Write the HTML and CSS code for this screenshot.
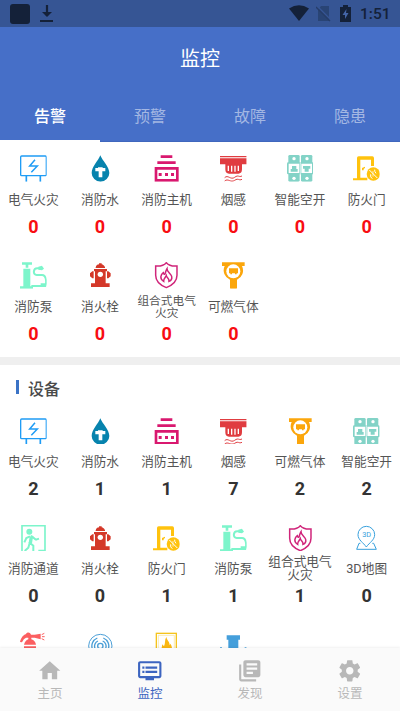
FILE: index.html
```html
<!DOCTYPE html>
<html lang="zh-CN">
<head>
<meta charset="utf-8">
<title>监控</title>
<link rel="stylesheet" href="styles.css">
</head>
<body>
<svg class="defs" width="0" height="0">
  <symbol id="elec" viewBox="0 0 80 80"><g fill="none" stroke="#1f9cf5" stroke-width="4"><rect x="2" y="3" width="77" height="59" rx="3"/><path d="M19 62V80M61 62V80" stroke-width="5"/><path d="M45 14L29 33H52L34 52" stroke-width="4.500"/></g></symbol>
  <symbol id="water" viewBox="0 0 80 80"><path fill="#0783ad" d="M40 1C34 17 14 36 14 54a26.500 26 0 0 0 53 0C67 36 46 17 40 1Z"/><path fill="#fff" d="M25 39H33V37H47V39H55V49H46V67H35V49H25Z"/></symbol>
  <symbol id="host" viewBox="0 0 80 80"><g fill="#d9186f"><path d="M23 1H58V9H23ZM13 19H68V27H13Z"/><path fill-rule="evenodd" d="M5 36H77V80H5ZM13 44V72H69V44Z"/><path d="M17 54H26V63H17ZM36 54H45V63H36ZM54 54H63V63H54Z"/></g></symbol>
  <symbol id="smoke" viewBox="0 0 80 80"><path fill="#e03c40" d="M0 3H80V7H0ZM0 10H80V28H66V43Q66 56 55 56H27Q16 56 16 43V28H0Z"/><path d="M25 32V48M35 32V50M45 32V50M55 32V48" stroke="#fff" stroke-width="4"/><path d="M14 68C24 58 32 76 44 67S56 68 66 63M14 78C24 69 32 84 44 76S56 78 66 73" fill="none" stroke="#e03c40" stroke-width="3"/></symbol>
  <symbol id="breaker" viewBox="0 0 80 80"><g fill="#83d3c7"><rect x="4" y="0" width="34" height="80" rx="4"/><rect x="42" y="0" width="34" height="80" rx="4"/><rect y="22" width="80" height="36" rx="4"/></g><path fill="#fff" d="M5 26H37V54H5ZM43 26H75V54H43Z"/><path d="M40 22V58" stroke="#fff" stroke-width="2"/><g fill="#83d3c7"><path d="M15 33H28V42H32V50H11V42H15ZM48 33H70V41H65V50H53V41H48Z"/></g><g fill="#fff"><circle cx="21" cy="11" r="5"/><circle cx="60" cy="11" r="5"/><circle cx="21" cy="70" r="5"/><circle cx="60" cy="70" r="5"/></g></symbol>
  <symbol id="door" viewBox="0 0 80 80"><g fill="#ffc20d"><path d="M12 9Q12 4 17 4H58Q63 4 63 9V33H54V14H22V68H43V76H0V70H12Z"/><path d="M27 39L36 35V39L32 42V46H27Z"/><circle cx="61" cy="57" r="20"/></g><path d="M49 45L73 69M53 58Q51 67 58 71M65 44Q64 49 69 55" fill="none" stroke="#fff" stroke-width="3"/><path d="M60 48V65" stroke="#fff" stroke-width="2"/></symbol>
  <symbol id="pump" viewBox="0 0 80 80"><g fill="#7df5cb"><path d="M6 1H36V8H25V17H17V8H6ZM10 20H31V73H39V80H0V73H10Z"/><path d="M55 14L66 11 72 20 66 25 55 23Z"/></g><path d="M64 19H52C39 19 38 39 50 39H66C80 39 80 63 76 72H34" fill="none" stroke="#7df5cb" stroke-width="6"/><path d="M62 64H77V75H62Z" fill="#7df5cb"/></symbol>
  <symbol id="hydrant" viewBox="0 0 80 80"><g fill="#d43829"><path d="M26 16C28 9 33 7 36 7V4H44V7C48 8 52 11 54 16V18H26ZM21 21H60V28H56V64H68V75H12V64H24V28H21Z"/><path d="M20 28V49H16L9 43V34L16 28ZM60 28V49H64L71 43V34L64 28Z"/></g><circle cx="40" cy="37" r="8" fill="#fff"/></symbol>
  <symbol id="shield" viewBox="0 0 80 80"><g fill="none" stroke="#d0257a" stroke-width="4.500"><path d="M40 2C34 9 20 13 8 12V40C8 57 22 70 40 77C58 70 72 57 72 40V12C60 13 46 9 40 2Z"/><path d="M32 58C18 50 24 37 31 32C32 37 34 37 36 36C38 31 38 26 42 20C42 30 54 35 56 43C58 51 53 56 48 58C49 49 42 49 40 41C37 48 31 50 32 58Z"/></g></symbol>
  <symbol id="gas" viewBox="0 0 80 80"><path fill="#fba60c" d="M6 1H74V12H66A30 30 0 0 1 51 53V78Q51 80 49 80H32Q30 80 30 78V53A30 30 0 0 1 14 12H6Z"/><circle cx="40" cy="28" r="21" fill="#fff"/><path fill="#fba60c" d="M27 19H54V34H50V37H45V34H36V37H31V34H27Z"/></symbol>
  <symbol id="exit" viewBox="0 0 80 80"><g fill="none" stroke="#7df5cb"><path stroke-width="5" d="M6 80V2H75V80M55 77H75"/><path d="M30 34L19 39 13 52M32 33C40 35 43 42 48 44L57 41M35 37L29 53 40 62V80M29 54L25 68 14 78" stroke-width="6"/><path d="M34 35L31 55" stroke-width="10"/></g><circle cx="28" cy="20" r="9" fill="#7df5cb"/></symbol>
  <symbol id="exting" viewBox="0 0 80 80"><g fill="#fb5f61"><path d="M0 30C3 17 11 8 17 7C21 0 30 0 33 8H44L62 5V22L44 17H34V22Q46 26 48 38H12Q15 26 25 22V17H18Q11 19 6 31ZM12 43H48V80H12Z"/><path d="M65 8L73 4M66 14H74M65 20L73 24" stroke="#fb5f61" stroke-width="3"/></g></symbol>
  <symbol id="alarm" viewBox="0 0 80 80"><g fill="none" stroke="#4b9fd7" stroke-width="3"><circle cx="40" cy="42" r="35"/><circle cx="40" cy="42" r="8" stroke-width="4"/><path d="M24 49A17 17 0 0 1 33 27M47 27A17 17 0 0 1 56 49M17 53A26 26 0 0 1 31 18M49 18A26 26 0 0 1 63 53" stroke-width="4"/></g></symbol>
  <symbol id="fire" viewBox="0 0 80 80"><rect x="10" y="4" width="60" height="74" fill="none" stroke="#f5c41d" stroke-width="4"/><path d="M16 10H64V72H16Z" fill="none" stroke="#f5d66a" stroke-width="1.500"/><path fill="#fbb812" d="M26 60C24 50 27 45 28 37L33 43C38 34 34 24 40 15C43 28 50 28 50 40L53 35C57 44 59 52 55 62Z"/></symbol>
  <symbol id="pipe" viewBox="0 0 80 80"><path fill="#459fdb" d="M20 10H60V23H55V80H25V23H20ZM0 46H6V80H0ZM74 46H80V80H74Z"/></symbol>
</svg>
<div class="screen">
  <div class="status">
    <span class="app"></span>
    <svg class="download" width="14" height="19" viewBox="0 0 14 19"><path d="M7 1V12M0 17H13" stroke="#142139" stroke-width="2.200"/><path d="M2 8H12L7 13Z" fill="#142139"/></svg>
    <svg class="wifi" width="20" height="16" viewBox="0 0 20 16"><path fill="#142139" d="M0 3.500Q10-3 20 3.500L10 16Z"/></svg>
    <svg class="sim" width="15" height="16" viewBox="0 0 15 16"><path fill="#294475" d="M5 0H13V15H2V4Z"/><path d="M1 0L15 14" stroke="#365594" stroke-width="1.500"/><path d="M0 1L14 15" stroke="#263d69" stroke-width="1.300"/></svg>
    <svg class="battery" width="11" height="17" viewBox="0 0 11 17"><path fill="#142139" d="M3 0H8V2H11V17H0V2H3Z"/><path fill="#4465a8" d="M6.500 4L2.500 10H5V14L8.500 8H6Z"/></svg>
    <span class="time">1:51</span>
  </div>
  <header class="header">
    <h1>监控</h1>
    <div class="tabs"><span class="tab on">告警</span><span class="tab">预警</span><span class="tab">故障</span><span class="tab">隐患</span></div>
  </header>
  <main class="content">
    <section class="grid alerts">
      <div class="cell"><svg><use href="#elec"/></svg><span class="label">电气火灾</span><b>0</b></div>
      <div class="cell"><svg><use href="#water"/></svg><span class="label">消防水</span><b>0</b></div>
      <div class="cell"><svg><use href="#host"/></svg><span class="label">消防主机</span><b>0</b></div>
      <div class="cell"><svg><use href="#smoke"/></svg><span class="label">烟感</span><b>0</b></div>
      <div class="cell"><svg><use href="#breaker"/></svg><span class="label">智能空开</span><b>0</b></div>
      <div class="cell"><svg><use href="#door"/></svg><span class="label">防火门</span><b>0</b></div>
      <div class="cell"><svg><use href="#pump"/></svg><span class="label">消防泵</span><b>0</b></div>
      <div class="cell"><svg><use href="#hydrant"/></svg><span class="label">消火栓</span><b>0</b></div>
      <div class="cell"><svg><use href="#shield"/></svg><span class="label long">组合式电气<br>火灾</span><b>0</b></div>
      <div class="cell"><svg><use href="#gas"/></svg><span class="label">可燃气体</span><b>0</b></div>
    </section>
    <h2 class="title">设备</h2>
    <section class="grid devices">
      <div class="cell"><svg><use href="#elec"/></svg><span class="label">电气火灾</span><b>2</b></div>
      <div class="cell"><svg><use href="#water"/></svg><span class="label">消防水</span><b>1</b></div>
      <div class="cell"><svg><use href="#host"/></svg><span class="label">消防主机</span><b>1</b></div>
      <div class="cell"><svg><use href="#smoke"/></svg><span class="label">烟感</span><b>7</b></div>
      <div class="cell"><svg><use href="#gas"/></svg><span class="label">可燃气体</span><b>2</b></div>
      <div class="cell"><svg><use href="#breaker"/></svg><span class="label">智能空开</span><b>2</b></div>
      <div class="cell"><svg><use href="#exit"/></svg><span class="label">消防通道</span><b>0</b></div>
      <div class="cell"><svg><use href="#hydrant"/></svg><span class="label">消火栓</span><b>0</b></div>
      <div class="cell"><svg><use href="#door"/></svg><span class="label">防火门</span><b>1</b></div>
      <div class="cell"><svg><use href="#pump"/></svg><span class="label">消防泵</span><b>1</b></div>
      <div class="cell"><svg><use href="#shield"/></svg><span class="label long">组合式电气<br>火灾</span><b>1</b></div>
      <div class="cell"><svg viewBox="0 0 80 80"><path fill="none" stroke="#36a0dc" stroke-width="3" d="M40 66C31 53 15 45 15 29a25 25 0 0 1 50 0C65 45 49 53 40 66ZM22 55H18L11 73H70L62 55H58"/><text x="41" y="35" text-anchor="middle" class="map-text">3D</text></svg><span class="label">3D地图</span><b>0</b></div>
      <div class="cell"><svg><use href="#exting"/></svg></div>
      <div class="cell"><svg><use href="#alarm"/></svg></div>
      <div class="cell"><svg><use href="#fire"/></svg></div>
      <div class="cell"><svg><use href="#pipe"/></svg></div>
    </section>
  </main>
  <nav class="nav">
    <div class="item"><svg viewBox="0 0 24 24"><path d="M10 20v-6h4v6h5v-8h3L12 3 2 12h3v8z"/></svg><span>主页</span></div>
    <div class="item on"><svg viewBox="0 0 24 24"><path d="M21 3H3c-1.100 0-2 .9-2 2v12c0 1.100.9 2 2 2h5v2h8v-2h5c1.100 0 1.990-.9 1.990-2L23 5c0-1.100-.9-2-2-2zm0 14H3V5h18v12zm-2-9H8v2h11V8zm0 4H8v2h11v-2zM7 8H5v2h2V8zm0 4H5v2h2v-2z"/></svg><span>监控</span></div>
    <div class="item"><svg viewBox="0 0 24 24"><path d="M4 6H2v14c0 1.100.9 2 2 2h14v-2H4V6zm16-4H8c-1.100 0-2 .9-2 2v12c0 1.100.9 2 2 2h12c1.100 0 2-.9 2-2V4c0-1.100-.9-2-2-2zm-1 9H9V9h10v2zm-4 4H9v-2h6v2zm4-8H9V5h10v2z"/></svg><span>发现</span></div>
    <div class="item"><svg viewBox="0 0 24 24"><path d="M19.430 12.980c.04-.32.07-.64.07-.98s-.03-.66-.07-.98l2.110-1.650c.19-.15.24-.42.12-.64l-2-3.460c-.12-.22-.39-.3-.61-.22l-2.490 1c-.52-.4-1.080-.73-1.690-.98l-.38-2.650A.488.488 0 0 0 14 2h-4c-.25 0-.46.18-.49.42l-.38 2.650c-.61.25-1.170.59-1.690.98l-2.490-1c-.23-.09-.49 0-.61.22l-2 3.460c-.13.22-.07.49.12.64l2.110 1.650c-.04.32-.07.65-.07.98s.03.66.07.98l-2.110 1.650c-.19.15-.24.42-.12.64l2 3.460c.12.22.39.3.61.22l2.490-1c.52.4 1.080.73 1.690.98l.38 2.650c.03.24.24.42.49.42h4c.25 0 .46-.18.49-.42l.38-2.650c.61-.25 1.170-.59 1.690-.98l2.490 1c.23.09.49 0 .61-.22l2-3.460c.12-.22.07-.49-.12-.64l-2.110-1.650zM12 15.500c-1.930 0-3.500-1.570-3.500-3.500s1.570-3.500 3.500-3.500 3.500 1.570 3.500 3.500-1.570 3.500-3.500 3.500z"/></svg><span>设置</span></div>
  </nav>
</div>
</body>
</html>
```
FILE: styles.css
```css
* { box-sizing: border-box; }
body { margin: 0; font-family: Roboto, "Noto Sans CJK SC", sans-serif; background: #fff; }
.defs { position: absolute; }
.screen { width: 400px; height: 711px; display: flex; flex-direction: column; overflow: hidden; }
.status { height: 27px; flex: none; background: #365594; display: flex; align-items: center; padding: 0 10px; color: #142139; }
.app { width: 20px; height: 20px; border-radius: 3px; background: #142139; }
.download { margin-left: 10px; }
.wifi { margin-left: auto; margin-top: -1px; }
.sim { margin-left: 7px; }
.battery { margin-left: 9px; margin-top: -1px; }
.time { margin-left: 9px; width: 30px; font-size: 15.500px; font-weight: 500; line-height: 28px; white-space: nowrap; }
.header { height: 115px; flex: none; background: linear-gradient(#466fc8 114px, #3f67bd 114px); color: #fff; display: flex; flex-direction: column; }
h1 { margin: 0; height: 64px; line-height: 65px; font-size: 20px; font-weight: 400; text-align: center; }
.tabs { display: flex; height: 51px; flex: none; }
.tab { flex: 1; text-align: center; font-size: 16px; line-height: 52px; color: #a3b7e3; height: 51px; }
.tab.on { color: #fff; font-weight: 500; border-bottom: 2px solid #fff; }
.content { flex: 1; min-height: 0; overflow: hidden; }
.grid { display: grid; grid-template-columns: repeat(6, 1fr); grid-auto-rows: 107.300px; }
.alerts { padding-top: 13px; height: 215px; }
.cell { display: flex; flex-direction: column; align-items: center; }
.cell svg { width: 26.670px; height: 26.670px; flex: none; }
.label { height: 35px; display: flex; align-items: center; justify-content: center; text-align: center; font-size: 12.700px; line-height: 13px; color: #555; white-space: nowrap; flex: none; }
.label.long { display: block; padding-top: 4px; }
.alerts .long { font-size: 11.700px; line-height: 12px; padding-top: 6px; }
.cell b { font-size: 18px; line-height: 20px; font-weight: 700; color: #333; }
.alerts b { color: #f80d12; }
.title { margin: 0; height: 60.500px; border-top: 8px solid #efefef; display: flex; align-items: center; padding: 0 0 6px 16px; font-size: 16px; font-weight: 500; color: #4a4a4a; }
.title::before { content: ""; width: 3px; height: 14px; background: #3b73c6; margin: -3px 9px 0 0; }
.map-text { font: 400 22px Roboto, sans-serif; fill: #36a0dc; }
.nav { height: 63px; flex: none; background: #fafafa; box-shadow: 0 -1px 2px rgba(0,0,0,.06); display: flex; position: relative; }
.item { flex: 1; display: flex; flex-direction: column; align-items: center; color: #b8b8b8; padding-top: 10px; font-size: 12.500px; line-height: 20px; }
.item svg { width: 25.500px; height: 25.500px; fill: currentColor; }
.item.on { color: #3c64c0; }
```
